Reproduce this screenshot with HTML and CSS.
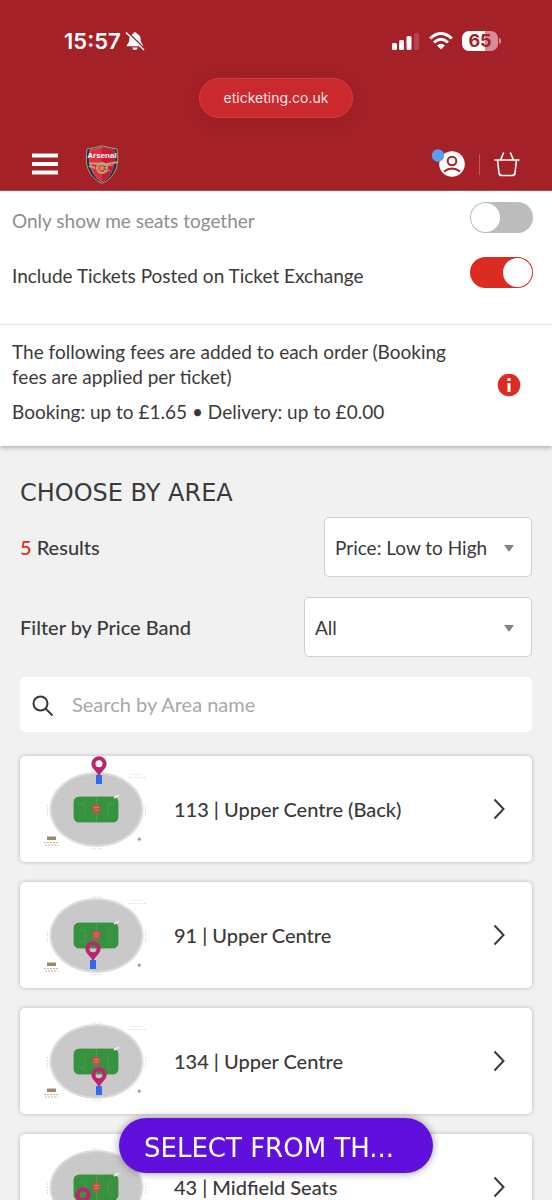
FILE: index.html
```
<!DOCTYPE html>
<html lang="en">
<head>
  <meta charset="UTF-8">
  <meta name="viewport" content="width=device-width, initial-scale=1.0">
  <title>Arsenal eTicketing</title>
  <link rel="stylesheet" href="styles.css">
</head>
<body>
  <!-- shared stadium drawing -->
  <svg class="defs" width="0" height="0" aria-hidden="true">
    <defs>
      <pattern id="seats" width="5" height="5" patternUnits="userSpaceOnUse">
        <path d="M0 0H5M0 0V5" stroke="#d0d0d2" stroke-width="0.6" fill="none"/>
      </pattern>
      <symbol id="stadium" viewBox="0 0 154 106">
        <ellipse cx="76.5" cy="53.500" rx="47" ry="37.500" fill="#dcdcdd"/>
        <ellipse cx="76.5" cy="53.500" rx="45" ry="35.500" fill="#c8c8c9"/>
        <ellipse cx="76.5" cy="53.500" rx="45" ry="35.500" fill="url(#seats)"/>
        <rect x="53" y="40" width="46" height="27" rx="6" fill="#d9dcd9"/>
        <rect x="53.5" y="40.500" width="45" height="26" rx="5.500" fill="#38913f"/>
        <path d="M76.500 41V66M59 48H65V60H59M94 48H88V60H94" stroke="#4f9f55" stroke-width="0.8" fill="none"/>
        <path d="M72.500 49.500Q76.300 47.500 80.200 49.500V53Q80 57 76.300 58.500Q72.500 56.500 72.500 53Z" fill="#c64f4c"/>
        <path d="M74 51.500H79M74.500 54H78.500" stroke="#dc8580" stroke-width="0.9"/>
        <path d="M94 42L99 39" stroke="#eeeeee" stroke-width="1.500"/>
        <path d="M71 15H82M71 92.500H82M27.500 49V60M125.500 49V60" stroke="#e2e2e2" stroke-width="1" stroke-dasharray="2 1"/>
        <path d="M112 18.500H122M109 21.500H126" stroke="#e4e4e4" stroke-width="1.200" stroke-dasharray="2 1"/>
        <rect x="27" y="80.500" width="9" height="3.500" fill="#9c8965"/>
        <path d="M24 86.500H39M25 89H38" stroke="#c4b79c" stroke-width="1.200" stroke-dasharray="2 1"/>
        <circle cx="119.300" cy="83.300" r="2.200" fill="#dddddd"/>
        <circle cx="119.300" cy="83.300" r="1" fill="#777777"/>
      </symbol>
      <symbol id="pin" viewBox="0 0 16 30" overflow="visible">
        <rect x="5" y="19" width="6" height="9" fill="#2f6bf0"/>
        <path d="M8 0.200A7.600 7.600 0 0 0 0.400 7.800C0.400 12.500 5.500 15 8 20.500C10.500 15 15.600 12.500 15.600 7.800A7.600 7.600 0 0 0 8 0.200ZM8 4.200A3.500 3.500 0 1 1 8 11.200A3.500 3.500 0 1 1 8 4.200Z" fill="#be246c" fill-rule="evenodd"/>
      </symbol>
    </defs>
  </svg>

  <div class="page">
    <header class="header">
      <div class="status-bar">
        <div class="status-left">
          <span class="time">15:57</span>
          <svg width="20" height="20" viewBox="0 0 20 20">
            <path d="M10 1.300C10.900 1.300 11.700 1.900 11.900 2.700C14.600 3.500 15.700 5.900 15.700 8.500C15.700 12.200 18.200 13.100 18.200 15.200H1.800C1.800 13.100 4.300 12.200 4.300 8.500C4.300 5.900 5.400 3.500 8.100 2.700C8.300 1.900 9.100 1.300 10 1.300Z" fill="#fff"/>
            <path d="M7.200 16.500H12.800Q12.300 19 10 19T7.200 16.500Z" fill="#fff"/>
            <path d="M2 0.500L20 18" stroke="#a32127" stroke-width="1.600"/>
            <path d="M1 1.500L19 19" stroke="#fff" stroke-width="1.500"/>
          </svg>
        </div>
        <div class="status-right">
          <svg width="28" height="20" viewBox="0 0 28 20">
            <rect x="0" y="12" width="5" height="7" rx="1.500" fill="#fff"/>
            <rect x="7" y="9" width="5" height="10" rx="1.500" fill="#fff"/>
            <rect x="14.500" y="5" width="5" height="14" rx="1.500" fill="#fff"/>
            <rect x="22" y="2" width="5" height="17" rx="1.500" fill="#b8424d"/>
          </svg>
          <svg width="24" height="20" viewBox="0 0 24 20">
            <g fill="none" stroke="#fff" stroke-width="3">
              <path d="M1.200 7.500Q12-2.500 22.800 7.500"/>
              <path d="M5 11.500Q12 5 19 11.500"/>
            </g>
            <path d="M8 14.500Q12 11.200 16 14.500L12 18.600Z" fill="#fff"/>
          </svg>
          <div class="battery"><span>65</span></div>
        </div>
      </div>
      <a class="address" href="#">eticketing.co.uk</a>
      <nav class="nav">
        <button class="icon-btn menu-btn" type="button" aria-label="Menu">
          <svg width="26" height="22" viewBox="0 0 26 22"><path d="M0 2.500H26M0 11H26M0 19.500H26" stroke="#fff" stroke-width="4"/></svg>
        </button>
        <a class="logo" href="#" aria-label="Home">
          <svg width="34" height="39" viewBox="0 0 34 39">
            <path d="M2 4Q9 3 17 0.800Q25 3 32 4Q34 16 31 24Q27 34 17 38.300Q7 34 3 24Q0 16 2 4Z" fill="#1d2c58" stroke="#b89a6c" stroke-width="1"/>
            <path d="M5 5Q11 4 17 2Q23 4 29 5Q31 15 28 23Q25 32 17 37Q9 32 6 23Q3 15 5 5Z" fill="#dc3040" stroke="#dc9c91" stroke-width="0.600"/>
            <path d="M17 2Q23 4 29 5Q31 15 28 23Q25 32 17 37Z" fill="#c41d33"/>
            <text class="logo-text" x="17" y="13" text-anchor="middle">Arsenal</text>
            <g fill="none" stroke="#c0a572" stroke-width="2">
              <path d="M4 18.500H12L20 19.500L33 17M4 21L10 23"/>
              <circle cx="17" cy="23" r="5"/>
              <path d="M12 23H22M17 18V28M13.500 19.500L20.500 26.500M20.500 19.500L13.500 26.500M21 21L28 20M20 27L25 25" stroke-width="1"/>
            </g>
          </svg>
        </a>
        <div class="nav-right">
          <button class="icon-btn" type="button" aria-label="Account">
            <svg width="34" height="30" viewBox="0 0 34 30">
              <circle cx="21" cy="15" r="12.800" fill="#fff"/>
              <circle cx="21" cy="12" r="4.300" fill="none" stroke="#a32127" stroke-width="2"/>
              <path d="M13 22.500Q21 16.500 29 22.500" fill="none" stroke="#a32127" stroke-width="2"/>
              <circle cx="7" cy="6.500" r="6.200" fill="#5b9cf4"/>
            </svg>
          </button>
          <span class="divider"></span>
          <button class="icon-btn" type="button" aria-label="Basket">
            <svg width="26" height="26" viewBox="0 0 26 26" fill="none" stroke="#fff" stroke-width="1.600" stroke-linecap="round" stroke-linejoin="round">
              <path d="M1 9H25M6.500 9L9.500 2M19.500 9L16.500 2M3.500 9L5 22Q5.400 24.500 8 24.500H18Q20.600 24.500 21 22L22.500 9"/>
            </svg>
          </button>
        </div>
      </nav>
    </header>

    <section class="options">
      <div class="option disabled">
        <label for="together">Only show me seats together</label>
        <input class="toggle" type="checkbox" id="together">
      </div>
      <div class="option">
        <label for="exchange">Include Tickets Posted on Ticket Exchange</label>
        <input class="toggle" type="checkbox" id="exchange" checked>
      </div>
    </section>

    <section class="fees">
      <div class="fees-text">
        <p>The following fees are added to each order (Booking fees are applied per ticket)</p>
        <p>Booking: up to £1.65 • Delivery: up to £0.00</p>
      </div>
      <button class="icon-btn" type="button" aria-label="Fee information">
        <svg width="24" height="24" viewBox="0 0 24 24">
          <circle cx="12" cy="12" r="11.300" fill="#dc2b20"/>
          <path d="M12 5V8M12 10V19" stroke="#fff" stroke-width="3"/>
        </svg>
      </button>
    </section>

    <main class="areas">
      <h1>CHOOSE BY AREA</h1>
      <div class="row">
        <label for="sort"><span class="count">5</span> Results</label>
        <div class="select select-sort">
          <select id="sort"><option>Price: Low to High</option></select>
        </div>
      </div>
      <div class="row">
        <label for="band">Filter by Price Band</label>
        <div class="select select-band">
          <select id="band"><option>All</option></select>
        </div>
      </div>
      <div class="search">
        <svg width="22" height="22" viewBox="0 0 22 22" fill="none" stroke="#3a3a3a" stroke-width="2"><circle cx="8.500" cy="9.500" r="7"/><path d="M13.500 14.500L20.500 21.500"/></svg>
        <input type="text" placeholder="Search by Area name" aria-label="Search by Area name">
      </div>

      <div class="area-list">
        <a class="area" href="#">
          <svg class="map" viewBox="0 0 154 106"><use href="#stadium"/><use href="#pin" x="71" y="0" width="16" height="30"/></svg>
          <span class="area-name">113 | Upper Centre (Back)</span>
          <svg class="chevron" viewBox="0 0 12 22"><path d="M1.500 1.500L10.500 11L1.500 20.500"/></svg>
        </a>
        <a class="area" href="#">
          <svg class="map" viewBox="0 0 154 106"><use href="#stadium"/><use href="#pin" x="65" y="59" width="16" height="30"/></svg>
          <span class="area-name">91 | Upper Centre</span>
          <svg class="chevron" viewBox="0 0 12 22"><path d="M1.500 1.500L10.500 11L1.500 20.500"/></svg>
        </a>
        <a class="area" href="#">
          <svg class="map" viewBox="0 0 154 106"><use href="#stadium"/><use href="#pin" x="71" y="59" width="16" height="30"/></svg>
          <span class="area-name">134 | Upper Centre</span>
          <svg class="chevron" viewBox="0 0 12 22"><path d="M1.500 1.500L10.500 11L1.500 20.500"/></svg>
        </a>
        <a class="area" href="#">
          <svg class="map" viewBox="0 0 154 106"><use href="#stadium"/><use href="#pin" x="55" y="53" width="16" height="30"/></svg>
          <span class="area-name">43 | Midfield Seats</span>
          <svg class="chevron" viewBox="0 0 12 22"><path d="M1.500 1.500L10.500 11L1.500 20.500"/></svg>
        </a>
      </div>
    </main>

    <button class="map-btn" type="button">SELECT FROM TH...</button>
  </div>
</body>
</html>
```
FILE: styles.css
```
* {
  box-sizing: border-box;
}
body {
  margin: 0;
  font-family: Lato, "Liberation Sans", sans-serif;
  font-size: 20px;
  line-height: 25px;
  color: #3a3a3a;
  background: #f1f1f1;
}
h1, p {
  margin: 0;
}
svg {
  display: block;
  flex: none;
}
.defs {
  position: absolute;
}
.page {
  height: 100vh;
  display: flex;
  flex-direction: column;
  overflow: hidden;
}

/* header */
.header {
  flex: none;
  background: #a32127;
  border-bottom: 1px solid #a84a4e;
}
.status-bar {
  display: flex;
  justify-content: space-between;
  align-items: center;
  padding: 28px 51px 24px 64px;
}
.status-left, .status-right {
  display: flex;
  align-items: center;
}
.status-left {
  gap: 4px;
}
.status-right {
  gap: 9px;
}
.time {
  font-family: Inter, sans-serif;
  font-size: 22px;
  font-weight: 600;
  line-height: 26px;
  color: #fff;
}
.battery {
  position: relative;
  width: 36px;
  height: 20px;
  margin-right: 3px;
  border-radius: 7px;
  background: linear-gradient(90deg, #fff 65%, #d98c95 65%);
  font-family: Inter, sans-serif;
  font-size: 18px;
  font-weight: 700;
  line-height: 20px;
  text-align: center;
  color: #a32127;
}
.battery::after {
  content: "";
  position: absolute;
  right: -3px;
  top: 7px;
  width: 2px;
  height: 6px;
  border-radius: 0 2px 2px 0;
  background: #d98c95;
}
.address {
  display: block;
  width: 154px;
  margin: 0 auto;
  border: 1px solid #dc3840;
  border-radius: 20px;
  background: #ca292d;
  box-shadow: 0 4px 16px rgba(120, 20, 30, 0.15);
  font-family: Inter, sans-serif;
  font-size: 14px;
  line-height: 38px;
  text-align: center;
  text-decoration: none;
  color: #fbe4e4;
}
.nav {
  display: flex;
  align-items: center;
  height: 52px;
  margin-top: 20px;
  padding: 0 32px;
}
.icon-btn {
  flex: none;
  padding: 0;
  border: none;
  background: none;
  cursor: pointer;
}
.logo {
  margin-left: 27px;
}
.logo-text {
  font-family: "Liberation Sans", sans-serif;
  font-size: 8px;
  font-weight: bold;
  fill: #fff;
}
.nav-right {
  display: flex;
  align-items: center;
  gap: 14px;
  margin-left: auto;
}
.divider {
  width: 1px;
  height: 21px;
  background: #c25a60;
}

/* options and fees */
.options {
  flex: none;
  display: flex;
  flex-direction: column;
  gap: 24px;
  padding: 11px 19px 36px 12px;
  background: #fff;
  border-bottom: 1px solid #ececec;
  font-size: 19px;
}
.option {
  display: flex;
  justify-content: space-between;
}
.option label {
  padding-top: 6px;
}
.disabled {
  color: #8e8e8e;
}
.toggle {
  appearance: none;
  width: 63px;
  height: 31px;
  margin: 0;
  padding: 1px;
  border-radius: 16px;
  background: #bcbcbc;
  cursor: pointer;
}
.toggle::before {
  content: "";
  display: block;
  width: 29px;
  height: 29px;
  border-radius: 50%;
  background: #fff;
}
.toggle:checked {
  background: #dc2b20;
}
.toggle:checked::before {
  margin-left: auto;
}
.fees {
  flex: none;
  display: flex;
  align-items: center;
  gap: 34px;
  padding: 14px 31px 22px 12px;
  background: #fff;
  box-shadow: 0 2px 4px rgba(0, 0, 0, 0.25);
  font-size: 19px;
  z-index: 1;
}
.fees .icon-btn {
  padding-top: 6px;
}
.fees-text {
  display: flex;
  flex: 1;
  flex-direction: column;
  gap: 10px;
}

/* areas */
.areas {
  flex: 1;
  display: flex;
  flex-direction: column;
  gap: 20px;
  min-height: 0;
  padding: 35px 20px 0;
  overflow-y: auto;
  scrollbar-width: none;
}
h1 {
  margin-bottom: -9px;
  font-family: "DejaVu Sans", sans-serif;
  font-size: 24px;
  font-weight: normal;
  line-height: 25px;
}
.row {
  display: flex;
  justify-content: space-between;
  align-items: center;
  font-weight: 500;
}
.count {
  color: #dc2b20;
}
.select {
  position: relative;
}
.select::after {
  content: "";
  position: absolute;
  top: 28px;
  right: 18px;
  border: 5px solid transparent;
  border-top: 7px solid #858585;
  border-bottom: none;
  pointer-events: none;
}
.select-sort {
  width: 208px;
}
.select-band {
  width: 228px;
}
.select select {
  appearance: none;
  display: block;
  width: 100%;
  height: 60px;
  padding: 0 10px;
  border: 1px solid #cfcfcf;
  border-radius: 5px;
  background: #fff;
  font: inherit;
  font-size: 19px;
  font-weight: 400;
  color: #3a3a3a;
}
.search {
  display: flex;
  flex: none;
  align-items: center;
  gap: 16px;
  height: 55px;
  padding: 0 12px;
  border-radius: 5px;
  background: #fff;
}
.search input {
  flex: 1;
  min-width: 0;
  border: none;
  outline: none;
  background: none;
  font: inherit;
}
.search input::placeholder {
  color: #a8a8a8;
}
.area-list {
  display: flex;
  flex-direction: column;
  gap: 20px;
  margin-top: 4px;
}
.area {
  display: flex;
  align-items: center;
  height: 106px;
  padding-right: 27px;
  border-radius: 5px;
  background: #fff;
  box-shadow: 0 0 4px rgba(0, 0, 0, 0.25);
  font-weight: 500;
  text-decoration: none;
  color: #3a3a3a;
}
.map {
  width: 154px;
  height: 106px;
}
.area-name {
  flex: 1;
}
.chevron {
  width: 12px;
  height: 22px;
  fill: none;
  stroke: #3a3a3a;
  stroke-width: 2;
}

.map-btn {
  position: fixed;
  left: 119px;
  right: 119px;
  bottom: 27px;
  height: 55px;
  padding: 4px 25px 0;
  border: none;
  border-radius: 28px;
  background: #610fdd;
  box-shadow: 0 0 8px rgba(0, 0, 0, 0.4);
  font-family: "DejaVu Sans", sans-serif;
  font-size: 26px;
  text-align: left;
  white-space: nowrap;
  color: #fff;
  z-index: 2;
  cursor: pointer;
}
```
